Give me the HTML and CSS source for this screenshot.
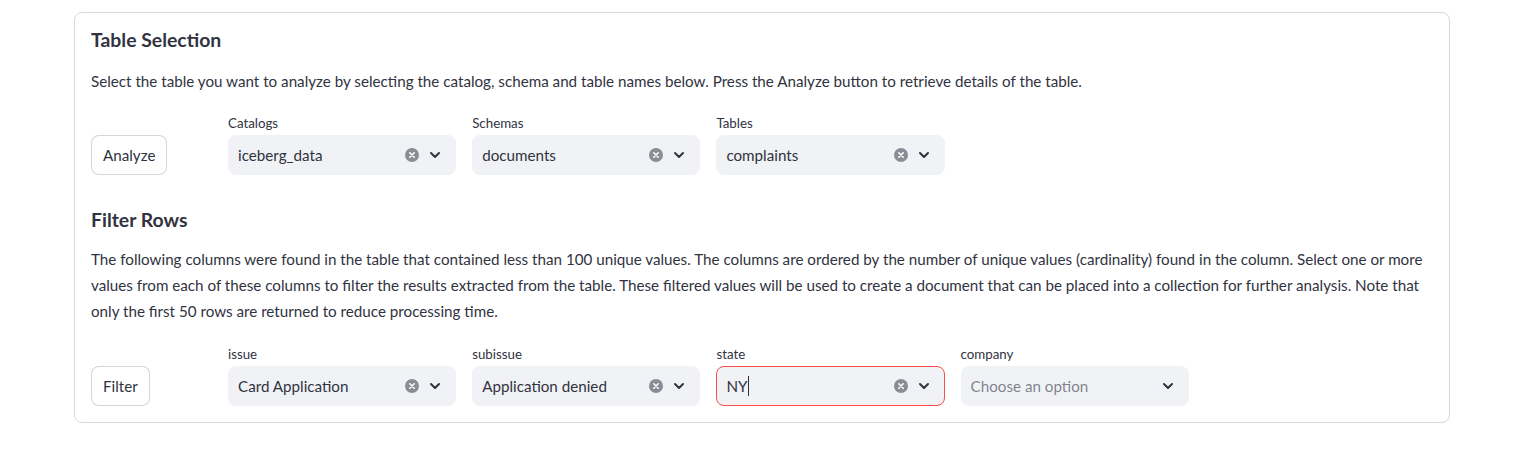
FILE: index.html
```html
<!DOCTYPE html>
<html lang="en">
<head>
<meta charset="utf-8">
<title>Table Selection</title>
<link rel="stylesheet" href="styles.css">
</head>
<body>
<div class="page">
  <div class="card">
    <h4 class="title first">Table Selection</h4>
    <p class="text">Select the table you want to analyze by selecting the catalog, schema and table names below. Press the Analyze button to retrieve details of the table.</p>
    <div class="row">
      <div class="btn-cell"><button class="btn">Analyze</button></div>
      <div class="field">
        <label class="label">Catalogs</label>
        <div class="select">
          <span class="value">iceberg_data</span>
          <span class="clear"><svg width="14" height="14" viewBox="0 0 14 14"><circle cx="7" cy="7" r="7" fill="#8b8d96"/><path d="M4.8 4.8l4.4 4.4M9.2 4.8l-4.4 4.4" stroke="#fff" stroke-width="1.6" stroke-linecap="round"/></svg></span>
          <span class="chev"><svg width="12" height="8" viewBox="0 0 12 8"><path d="M2 2l4 4 4-4" fill="none" stroke="#31333f" stroke-width="2" stroke-linecap="round" stroke-linejoin="round"/></svg></span>
        </div>
      </div>
      <div class="field">
        <label class="label">Schemas</label>
        <div class="select">
          <span class="value">documents</span>
          <span class="clear"><svg width="14" height="14" viewBox="0 0 14 14"><circle cx="7" cy="7" r="7" fill="#8b8d96"/><path d="M4.8 4.8l4.4 4.4M9.2 4.8l-4.4 4.4" stroke="#fff" stroke-width="1.6" stroke-linecap="round"/></svg></span>
          <span class="chev"><svg width="12" height="8" viewBox="0 0 12 8"><path d="M2 2l4 4 4-4" fill="none" stroke="#31333f" stroke-width="2" stroke-linecap="round" stroke-linejoin="round"/></svg></span>
        </div>
      </div>
      <div class="field">
        <label class="label">Tables</label>
        <div class="select">
          <span class="value">complaints</span>
          <span class="clear"><svg width="14" height="14" viewBox="0 0 14 14"><circle cx="7" cy="7" r="7" fill="#8b8d96"/><path d="M4.8 4.8l4.4 4.4M9.2 4.8l-4.4 4.4" stroke="#fff" stroke-width="1.6" stroke-linecap="round"/></svg></span>
          <span class="chev"><svg width="12" height="8" viewBox="0 0 12 8"><path d="M2 2l4 4 4-4" fill="none" stroke="#31333f" stroke-width="2" stroke-linecap="round" stroke-linejoin="round"/></svg></span>
        </div>
      </div>
      <div></div>
      <div></div>
    </div>

    <h4 class="title section">Filter Rows</h4>
    <p class="text">The following columns were found in the table that contained less than 100 unique values. The columns are ordered by the number of unique values (cardinality) found in the column. Select one or more values from each of these columns to filter the results extracted from the table. These filtered values will be used to create a document that can be placed into a collection for further analysis. Note that only the first 50 rows are returned to reduce processing time.</p>
    <div class="row filters">
      <div class="btn-cell"><button class="btn">Filter</button></div>
      <div class="field">
        <label class="label">issue</label>
        <div class="select">
          <span class="value">Card Application</span>
          <span class="clear"><svg width="14" height="14" viewBox="0 0 14 14"><circle cx="7" cy="7" r="7" fill="#8b8d96"/><path d="M4.8 4.8l4.4 4.4M9.2 4.8l-4.4 4.4" stroke="#fff" stroke-width="1.6" stroke-linecap="round"/></svg></span>
          <span class="chev"><svg width="12" height="8" viewBox="0 0 12 8"><path d="M2 2l4 4 4-4" fill="none" stroke="#31333f" stroke-width="2" stroke-linecap="round" stroke-linejoin="round"/></svg></span>
        </div>
      </div>
      <div class="field">
        <label class="label">subissue</label>
        <div class="select">
          <span class="value">Application denied</span>
          <span class="clear"><svg width="14" height="14" viewBox="0 0 14 14"><circle cx="7" cy="7" r="7" fill="#8b8d96"/><path d="M4.8 4.8l4.4 4.4M9.2 4.8l-4.4 4.4" stroke="#fff" stroke-width="1.6" stroke-linecap="round"/></svg></span>
          <span class="chev"><svg width="12" height="8" viewBox="0 0 12 8"><path d="M2 2l4 4 4-4" fill="none" stroke="#31333f" stroke-width="2" stroke-linecap="round" stroke-linejoin="round"/></svg></span>
        </div>
      </div>
      <div class="field">
        <label class="label">state</label>
        <div class="select focus">
          <span class="value">NY<span class="caret"></span></span>
          <span class="clear"><svg width="14" height="14" viewBox="0 0 14 14"><circle cx="7" cy="7" r="7" fill="#8b8d96"/><path d="M4.8 4.8l4.4 4.4M9.2 4.8l-4.4 4.4" stroke="#fff" stroke-width="1.6" stroke-linecap="round"/></svg></span>
          <span class="chev"><svg width="12" height="8" viewBox="0 0 12 8"><path d="M2 2l4 4 4-4" fill="none" stroke="#31333f" stroke-width="2" stroke-linecap="round" stroke-linejoin="round"/></svg></span>
        </div>
      </div>
      <div class="field">
        <label class="label">company</label>
        <div class="select">
          <span class="value placeholder">Choose an option</span>
          <span class="chev"><svg width="12" height="8" viewBox="0 0 12 8"><path d="M2 2l4 4 4-4" fill="none" stroke="#31333f" stroke-width="2" stroke-linecap="round" stroke-linejoin="round"/></svg></span>
        </div>
      </div>
      <div></div>
    </div>
  </div>
</div>
</body>
</html>
```

FILE: styles.css
```css
* { box-sizing: border-box; }

html, body {
  margin: 0;
  padding: 0;
  background: #ffffff;
}

body {
  font-family: "Lato", "Noto Sans", sans-serif;
  color: #31333f;
}

.page {
  padding: 12px 0 0 74px;
}

.card {
  width: 1376px;
  border: 1px solid #d9d9dd;
  border-radius: 8px;
  padding: 16px;
  display: flex;
  flex-direction: column;
  gap: 16px;
}

.title {
  margin: 0;
  font-size: 19.4px;
  line-height: 24px;
  font-weight: 700;
  color: #31333f;
}

.title.first {
  margin-top: -1px;
  margin-bottom: 0;
}

.title.section {
  margin-top: 17px;
  margin-bottom: -2px;
}

.text {
  margin: 0;
  font-size: 15.2px;
  line-height: 26px;
}

.row {
  display: grid;
  grid-template-columns: 121px repeat(5, 1fr);
  column-gap: 16px;
  align-items: end;
}

.row.filters {
  margin-top: 1px;
}

.btn-cell {
  display: flex;
}

.btn {
  height: 40px;
  padding: 0 11px;
  background: #ffffff;
  border: 1px solid rgba(49, 51, 63, 0.2);
  border-radius: 8px;
  font-family: inherit;
  font-size: 15.2px;
  color: #31333f;
}

.field {
  display: flex;
  flex-direction: column;
}

.label {
  font-size: 13.3px;
  line-height: 18px;
  padding-top: 4px;
  margin-bottom: 3px;
}

.select {
  height: 40px;
  background: #f0f2f6;
  border: 1px solid #f0f2f6;
  border-radius: 8px;
  display: flex;
  align-items: center;
  padding: 0 14px 0 9px;
}

.select.focus {
  border-color: #ff4b4b;
}

.value {
  flex: 1;
  font-size: 15.2px;
  display: flex;
  align-items: center;
  white-space: nowrap;
  overflow: hidden;
}

.value.placeholder {
  color: rgba(49, 51, 63, 0.6);
}

.caret {
  display: inline-block;
  width: 1px;
  height: 20px;
  background: #31333f;
  margin-left: 1px;
}

.clear {
  display: flex;
  width: 14px;
  height: 14px;
  margin-right: 10px;
}

.chev {
  display: flex;
  width: 12px;
  height: 8px;
}
```
